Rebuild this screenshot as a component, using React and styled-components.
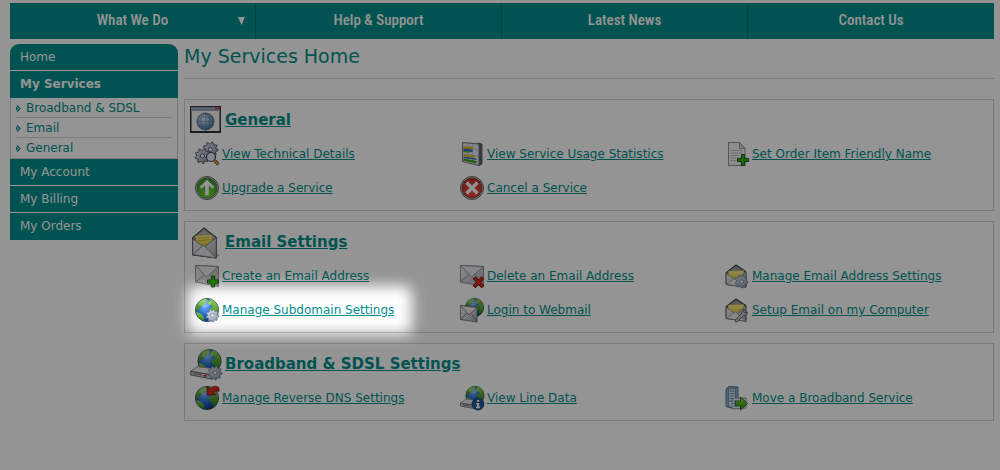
import styled, { createGlobalStyle, css } from 'styled-components';

const GlobalStyle = createGlobalStyle`
    * {
        box-sizing: border-box;
    }
    body {
        margin: 0;
        background: #ffffff;
        color: #008f8c;
        font-family: Verdana, "DejaVu Sans", sans-serif;
        font-size: 12px;
    }
    a {
        color: inherit;
    }
    ul {
        margin: 0;
        padding: 0;
        list-style: none;
    }
`

const Page = styled.div`
    min-height: 100vh;
    padding: 3px 6px 20px 10px;
`
const NavBar = styled.nav`
    display: grid;
    grid-template-columns: repeat(4, 1fr);
    height: 36px;
    background: #008f8c;
`
const NavLink = styled.a`
    display: flex;
    align-items: center;
    padding: 0 10px;
    color: #ffffff;
    font-family: "Roboto Condensed", Roboto, sans-serif;
    font-size: 15px;
    font-weight: 500;
    line-height: 18px;
    text-decoration: none;
    border-right: 1px solid #007471;

    &:last-child {
        border-right: none;
    }
`
const NavText = styled.span`
    flex: 1;
    padding-bottom: 2px;
    text-align: center;
`
const Arrow = styled.svg`
    width: 7px;
    height: 8px;
    margin-left: -7px;
`
const Columns = styled.div`
    display: flex;
    align-items: flex-start;
    gap: 6px;
    margin-top: 5px;
`
const Sidebar = styled.aside`
    width: 168px;
    flex-shrink: 0;
    border-radius: 9px 9px 0 0;
    overflow: hidden;
`
const SideLink = styled.a`
    display: block;
    height: 27px;
    padding-left: 10px;
    line-height: 26px;
    background: #008f8c;
    border-bottom: 1px solid #ffffff;
    color: #ffffff;
    text-decoration: none;

    ${props => props.$active && css`
        border-bottom: none;
        font-weight: bold;
    `}
    ${props => props.$last && css`
        border-bottom: none;
    `}
`
const SubMenu = styled.ul`
    padding: 0 5px;
    border: 1px solid #d2d2d2;
    border-top: none;
`
const SubItem = styled.li`
    height: 20px;
    line-height: 20px;
    border-bottom: 1px solid #d2d2d2;

    &:last-child {
        border-bottom: none;
    }
`
const SubLink = styled.a`
    display: flex;
    align-items: center;
    gap: 5px;
    text-decoration: none;
`
const Chevron = styled.svg`
    width: 5px;
    height: 7px;
`
const Main = styled.main`
    flex: 1;
    min-width: 0;
`
const Title = styled.h1`
    height: 35px;
    margin: 0 0 20px;
    font-size: 19px;
    font-weight: normal;
    line-height: 24px;
    border-bottom: 1px solid #d2d2d2;
`
const Panel = styled.section`
    margin-bottom: 10px;
    padding: 5px 8px 0 5px;
    border: 1px solid #d2d2d2;
`
const PanelHead = styled.h2`
    display: flex;
    align-items: center;
    gap: 3px;
    height: 32px;
    margin: 0 0 5px;
    font-size: 15px;
    line-height: 20px;
`
const HeadLink = styled.a`
    padding-bottom: 3px;
`
const Services = styled.ul`
    display: grid;
    grid-template-columns: repeat(3, 1fr);
`
const Service = styled.li`
    height: 34px;
    padding-left: 5px;
`
const ServiceLink = styled.a`
    position: relative;
    display: inline-flex;
    align-items: center;
    gap: 3px;
    height: 24px;
    white-space: nowrap;
`
const Icon = styled.svg`
    flex-shrink: 0;
    width: ${props => props.$size}px;
    height: ${props => props.$size}px;
    overflow: visible;
`
const Gradients = styled.svg`
    position: absolute;
    width: 0;
    height: 0;
`
// dims the whole page and leaves a soft hole round its parent
const Spotlight = styled.span`
    position: absolute;
    inset: -12px -18px -12px -7px;
    z-index: 10;
    border-radius: 8px;
    box-shadow: 0 0 0 3000px rgba(0, 0, 0, 0.42);
    filter: blur(7px);
    pointer-events: none;
`

const Defs = () => (
    <Gradients aria-hidden='true'>
        <defs>
            <radialGradient id='sea' cx='.4' cy='.35' r='.7'>
                <stop offset='0' stopColor='#6fb4ff' />
                <stop offset='.5' stopColor='#2468cc' />
                <stop offset='1' stopColor='#0c2c70' />
            </radialGradient>
            <linearGradient id='land' x1='0' y1='0' x2='0' y2='1'>
                <stop offset='0' stopColor='#8ed04e' />
                <stop offset='1' stopColor='#2c7c22' />
            </linearGradient>
            <linearGradient id='paper' x1='0' y1='0' x2='1' y2='1'>
                <stop offset='0' stopColor='#f6f6f8' />
                <stop offset='1' stopColor='#a6a8ae' />
            </linearGradient>
            <linearGradient id='metal' x1='0' y1='0' x2='1' y2='1'>
                <stop offset='0' stopColor='#e4eaf2' />
                <stop offset='1' stopColor='#7c8ca2' />
            </linearGradient>
            <linearGradient id='yellow' x1='0' y1='0' x2='0' y2='1'>
                <stop offset='0' stopColor='#fff2a0' />
                <stop offset='1' stopColor='#e0c020' />
            </linearGradient>
            <radialGradient id='green' cx='.5' cy='.8' r='.8'>
                <stop offset='0' stopColor='#6ee02c' />
                <stop offset='1' stopColor='#3a8a24' />
            </radialGradient>
            <radialGradient id='red' cx='.5' cy='.8' r='.8'>
                <stop offset='0' stopColor='#f04a44' />
                <stop offset='1' stopColor='#c03030' />
            </radialGradient>
            <radialGradient id='pale' cx='.4' cy='.35' r='.7'>
                <stop offset='0' stopColor='#d4e8f8' />
                <stop offset='1' stopColor='#4a7098' />
            </radialGradient>
            <linearGradient id='arrow' x1='0' y1='0' x2='0' y2='1'>
                <stop offset='0' stopColor='#8ae040' />
                <stop offset='1' stopColor='#2c8c10' />
            </linearGradient>
        </defs>
    </Gradients>
)

const Globe = ({ x = 12, y = 12, r = 12 }) => (
    <g transform={`translate(${x} ${y}) scale(${r / 12})`}>
        <circle r='11.6' fill='url(#sea)' stroke='#244a60' strokeWidth='.8' />
        <path fill='url(#land)' d='M-11-3C-10-7-6-11-1-11.3L1-10l-2 1 1 2-3 1-1 2-3 1-1 2-1 3-2-1z' />
        <path fill='url(#land)' d='M-10.500 2l3 1 3 2 2 3-1 3C-7 10-10 7-10.500 2z' />
        <path fill='url(#land)' d='M3-11C7-10 11-6 11.300-1L11 4 8 8 6 9 5 5 2 2 3-2 6-3 4-5 1-6 2-9z' />
        <ellipse cx='-2' cy='-6.500' rx='6' ry='3.500' fill='#ffffff' opacity='.25' />
    </g>
)

const gearPoints = (x, y, r) => {
    const points = [];
    for (let i = 0; i < 36; i++) {
        const angle = (i / 36) * Math.PI * 2;
        const radius = i % 4 < 2 ? r : r * 0.76;
        points.push(`${(x + Math.cos(angle) * radius).toFixed(2)},${(y + Math.sin(angle) * radius).toFixed(2)}`);
    }
    return points.join(' ');
}

const Gear = ({ x, y, r, stroke = '#66788e' }) => (
    <g>
        <polygon points={gearPoints(x, y, r)} fill='url(#metal)' stroke={stroke} strokeWidth='.8' strokeLinejoin='round' />
        <circle cx={x} cy={y} r={r * 0.5} fill='#b4c2d2' />
        <circle cx={x} cy={y} r={r * 0.27} fill='#ffffff' stroke={stroke} strokeWidth='.8' />
    </g>
)

const Envelope = () => (
    <g stroke='#85878b' strokeWidth='.9' strokeLinejoin='round'>
        <path fill='url(#paper)' d='M.5 1.500l23 1v20L.5 18z' />
        <path fill='none' d='M.8 18l8-7M23.200 22l-7-10' />
        <path fill='#e9e9ec' d='M.5 1.500L11.500 13 23.500 2.500z' />
    </g>
)

const OpenEnvelope = () => (
    <g strokeLinejoin='round'>
        <path fill='#606266' stroke='#3d3f44' d='M1 8.5L11 .8l10 6.7v15.7L1 20.5z' />
        <path fill='#9b9da2' d='M2.5 8.5L11 2l8.5 6-8 7z' />
        <path fill='url(#yellow)' stroke='#b8a030' strokeWidth='.5' d='M3.2 7l15.6-.5v5L11 17l-7.8-6z' />
        <path fill='url(#paper)' stroke='#828489' strokeWidth='.7' d='M1.3 9.5L11 16l9.7-8v15L1.3 20.3z' />
        <path fill='#ebebef' stroke='#828489' strokeWidth='.7' d='M1.3 20.3L10.5 14l10.2 9z' />
    </g>
)

const Modem = () => (
    <g strokeLinejoin='round'>
        <path fill='#ededf0' stroke='#777a80' strokeWidth='.7' d='M.5 17L6 13l17 2-4 5z' />
        <path fill='#c6c9d0' stroke='#55595f' strokeWidth='.7' d='M.5 17l18.500 3v3.500L.5 20z' />
        <path stroke='#62656c' strokeWidth='.8' d='M3 18.800l7 1.200' />
        <path stroke='#e02020' strokeWidth='1.400' d='M11.500 20.400l2.500.4' />
    </g>
)

const Plus = ({ x, y }) => (
    <path
        transform={`translate(${x} ${y})`}
        fill='#2fae10'
        stroke='#145004'
        strokeWidth='.9'
        d='M-1.600-5.500h3.200v3.900h3.900v3.200H1.600v3.900h-3.200V1.600h-3.900v-3.200h3.900z'
    />
)

const drawings = {
    window: (
        <>
            <path fill='#30343a' d='M0 1h31v27H0z' />
            <path fill='#93a4b8' d='M1 2h29v4H1z' />
            <path fill='#e02030' d='M25 2.500h2v2h-2zM28 2.500h2v2h-2z' />
            <path fill='#f4f5f7' d='M1.500 6h28v20h-28z' />
            <circle cx='15.500' cy='16.500' r='8.500' fill='url(#pale)' stroke='#48617c' strokeWidth='.8' />
            <path fill='none' stroke='#3d6288' strokeWidth='.5' opacity='.7' d='M7 16.500h17M15.500 8v17M8.500 12h14M8.500 21h14M15.500 8c-6 4-6 13 0 17M15.500 8c6 4 6 13 0 17' />
        </>
    ),
    gears: (
        <>
            <Gear x={15.5} y={7.5} r={7.5} stroke='#383e48' />
            <Gear x={7.5} y={14} r={7.5} stroke='#383e48' />
            <path stroke='#5a4010' strokeWidth='3.200' d='M19.500 18.500l4 4' />
            <path stroke='#e0a040' strokeWidth='1.800' d='M19.500 18.500l4 4' />
            <circle cx='16' cy='15' r='4.500' fill='#dcebf7' stroke='#424b58' strokeWidth='1.200' />
        </>
    ),
    stats: (
        <>
            <path fill='#60646c' stroke='#42464c' strokeWidth='.8' d='M18 1l4 1v20l-3 1.500z' />
            <path fill='#e0ebf4' stroke='#68707a' strokeWidth='1' d='M2.500.5L19 2v21.500l-16.500-4z' />
            <path stroke='#abc0d0' strokeWidth='.6' d='M7.500 1.500v19M12.500 2v20M3 6l15 1.500M3 12l15 2' />
            <path fill='#e8b81c' d='M3.500 4l9 1v2.500l-9-1z' />
            <path fill='#2870c0' d='M3.500 6.500l9 1V10l-9-1z' />
            <path fill='#409c18' d='M3.500 9l6 .8v1l-6-.8z' />
            <path fill='#e8b81c' d='M3.500 12l11 1.500V16l-11-2z' />
            <path fill='#2870c0' d='M3.500 14.500l13 2V18l-13-2z' />
            <path fill='#409c18' d='M3.500 16.500l13 2.500v2.500l-13-3z' />
        </>
    ),
    pageAdd: (
        <>
            <path fill='#f1f2f4' stroke='#84878c' strokeWidth='.9' d='M3.500.5h11l5.500 6v17H3.500z' />
            <path fill='#d0d2d6' stroke='#84878c' strokeWidth='.8' d='M14.500.5v6H20z' />
            <path stroke='#bbbdc2' strokeWidth='.9' d='M5.500 8.500h12M5.500 11h12M5.500 13.500h8M5.500 16h7M5.500 18.500h6' />
            <Plus x={18} y={18} />
        </>
    ),
    upgrade: (
        <>
            <circle cx='12' cy='12' r='11.500' fill='#d5d8da' stroke='#5e6264' />
            <circle cx='12' cy='12' r='10' fill='url(#green)' stroke='#3c6e2c' strokeWidth='.8' />
            <path fill='#ffffff' stroke='#5a9f48' strokeWidth='.4' d='M12 3.500l7.500 7.500-2 2-3.500-3.300V19.500h-4V9.700L6.500 13l-2-2z' />
        </>
    ),
    cancel: (
        <>
            <circle cx='12' cy='12' r='11.500' fill='#d5d8da' stroke='#5e6264' />
            <circle cx='12' cy='12' r='10' fill='url(#red)' stroke='#772020' strokeWidth='.8' />
            <path stroke='#ffffff' strokeWidth='3.400' d='M6.500 6.500l11 11M17.500 6.500l-11 11' />
        </>
    ),
    mail: (
        <g strokeLinejoin='round'>
            <path fill='#818388' d='M24 30l6-1-4-4z' opacity='.6' />
            <path fill='#7c7e83' stroke='#404248' d='M2.500 10.500L14 .8l12.500 9.700V31l-24-3z' />
            <path fill='#b5b7bc' d='M4 11L14 2.500 25 11l-10 7z' />
            <path fill='url(#yellow)' stroke='#a08c20' strokeWidth='.6' d='M5 8.500l17-1 .5 8-9 4.500L6 15z' />
            <path stroke='#c0a020' strokeWidth='.8' d='M7.500 11l12-.8M8 13.500l12-.8' />
            <path fill='url(#paper)' stroke='#74767b' strokeWidth='.8' d='M2.800 12L14 20l12.200-9v20L2.800 27.500z' />
            <path fill='#e2e3e7' stroke='#74767b' strokeWidth='.8' d='M2.800 27.500L13.500 18l12.700 13z' />
        </g>
    ),
    mailAdd: (
        <>
            <Envelope />
            <Plus x={18} y={17.5} />
        </>
    ),
    mailDelete: (
        <>
            <Envelope />
            <path stroke='#701008' strokeWidth='3.800' d='M14 13.500l9 9.500M23 13.500L14 23' />
            <path stroke='#e02a20' strokeWidth='2.400' d='M14.500 14l8 8.500M22.500 14l-8 8.500' />
        </>
    ),
    mailGear: (
        <>
            <OpenEnvelope />
            <Gear x={16.500} y={17.500} r={6.500} />
        </>
    ),
    mailWrench: (
        <>
            <OpenEnvelope />
            <path fill='#c7cbd1' stroke='#54585f' strokeWidth='.9' strokeLinejoin='round' d='M10.500 22l6-6.500c-.5-2 .8-4 3-4l-1 2.500 1.500 1.200 2.300-1.200c.3 2.300-1.500 4-3.800 3.700l-6 6c-1.500.8-3-.2-2-1.700z' />
        </>
    ),
    globeGear: (
        <>
            <Globe />
            <Gear x={17.5} y={17.5} r={6.5} />
        </>
    ),
    webmail: (
        <>
            <Globe x={14.5} y={9.5} r={9.5} />
            <g stroke='#66686d' strokeWidth='.8' strokeLinejoin='round'>
                <path fill='url(#paper)' d='M.5 7.500l16.500 2V24L.5 21.500z' />
                <path fill='none' d='M.8 21.500l6-6.500M16.800 23.500l-5-7' />
                <path fill='#ededf0' d='M.5 7.500L9 17l8-7.500z' />
            </g>
        </>
    ),
    broadband: (
        <>
            <Globe x={19.5} y={12} r={12} />
            <g transform='translate(0 2) scale(1.200)'>
                <Modem />
            </g>
            <Gear x={25} y={24} r={7} />
        </>
    ),
    reverse: (
        <>
            <Globe />
            <path fill='#dc2626' stroke='#801414' strokeWidth='.8' strokeLinejoin='round' d='M12 .5l3 2.500C18-.500 22-.500 24 2v3.500c-2-1-4-.5-5.500.5l2.500 2.500-9 .5z' />
        </>
    ),
    lineData: (
        <>
            <Globe x={15} y={9.5} r={9.5} />
            <Modem />
            <circle cx='18' cy='18' r='6' fill='#1c5c98' stroke='#123c64' strokeWidth='.8' />
            <path fill='#ffffff' d='M17 14h2.200v1.800H17zM16 17h3.200v4H20v1.200h-4V21h1v-2.800h-1z' />
        </>
    ),
    server: (
        <>
            <path fill='#84b0d0' stroke='#485f74' strokeWidth='.8' d='M1 3l3-2.500 9 .5v20l-5 1.500-7-2z' />
            <path fill='#dbeaf5' stroke='#485f74' strokeWidth='.6' d='M3.500 3l7-.5v20l-7-2z' />
            <path stroke='#4c84b0' strokeWidth='1' d='M4.500 5h5M4.500 7.500h5M4.500 10h5M4.500 12.500h5M4.500 15h5' />
            <path fill='#dbeaf5' stroke='#687f94' strokeWidth='.8' d='M7 14l2-2 12 0v10l-14 1z' />
            <path stroke='#4c84b0' strokeWidth='1' d='M8.500 15h3M8.500 17.500h3M8.500 20h3' />
            <path fill='url(#arrow)' stroke='#1e5c0c' strokeWidth='.8' strokeLinejoin='round' d='M10.500 15h5v-4l7 6.500-7 6.500v-4h-5z' />
        </>
    ),
}

const panels = [
    {
        title: 'General',
        icon: 'window',
        services: [
            { name: 'View Technical Details', icon: 'gears' },
            { name: 'View Service Usage Statistics', icon: 'stats' },
            { name: 'Set Order Item Friendly Name', icon: 'pageAdd' },
            { name: 'Upgrade a Service', icon: 'upgrade' },
            { name: 'Cancel a Service', icon: 'cancel' },
        ],
    },
    {
        title: 'Email Settings',
        icon: 'mail',
        services: [
            { name: 'Create an Email Address', icon: 'mailAdd' },
            { name: 'Delete an Email Address', icon: 'mailDelete' },
            { name: 'Manage Email Address Settings', icon: 'mailGear' },
            { name: 'Manage Subdomain Settings', icon: 'globeGear', highlighted: true },
            { name: 'Login to Webmail', icon: 'webmail' },
            { name: 'Setup Email on my Computer', icon: 'mailWrench' },
        ],
    },
    {
        title: 'Broadband & SDSL Settings',
        icon: 'broadband',
        services: [
            { name: 'Manage Reverse DNS Settings', icon: 'reverse' },
            { name: 'View Line Data', icon: 'lineData' },
            { name: 'Move a Broadband Service', icon: 'server' },
        ],
    },
]

const Drawing = ({ name, size }) => (
    <Icon $size={size} viewBox={`0 0 ${size} ${size}`} aria-hidden='true'>
        {drawings[name]}
    </Icon>
)

const App = () => {
    return (
        <Page>
            <GlobalStyle />
            <Defs />
            <NavBar>
                <NavLink href='#what-we-do'>
                    <NavText>What We Do</NavText>
                    <Arrow viewBox='0 0 7 8' aria-hidden='true'>
                        <path fill='#ffffff' d='M0 0h7L3.500 8z' />
                    </Arrow>
                </NavLink>
                <NavLink href='#help'><NavText>Help &amp; Support</NavText></NavLink>
                <NavLink href='#news'><NavText>Latest News</NavText></NavLink>
                <NavLink href='#contact'><NavText>Contact Us</NavText></NavLink>
            </NavBar>
            <Columns>
                <Sidebar>
                    <SideLink href='#home'>Home</SideLink>
                    <SideLink href='#services' $active>My Services</SideLink>
                    <SubMenu>
                        {['Broadband & SDSL', 'Email', 'General'].map(name => (
                            <SubItem key={name}>
                                <SubLink href='#services'>
                                    <Chevron viewBox='0 0 5 7' aria-hidden='true'>
                                        <path fill='none' stroke='#008f8c' strokeWidth='1.200' d='M1 .5l3 3-3 3' />
                                        <path fill='#008f8c' d='M0 1.500l2 2-2 2z' />
                                    </Chevron>
                                    {name}
                                </SubLink>
                            </SubItem>
                        ))}
                    </SubMenu>
                    <SideLink href='#account'>My Account</SideLink>
                    <SideLink href='#billing'>My Billing</SideLink>
                    <SideLink href='#orders' $last>My Orders</SideLink>
                </Sidebar>
                <Main>
                    <Title>My Services Home</Title>
                    {panels.map(panel => (
                        <Panel key={panel.title}>
                            <PanelHead>
                                <Drawing name={panel.icon} size={32} />
                                <HeadLink href='#services'>{panel.title}</HeadLink>
                            </PanelHead>
                            <Services>
                                {panel.services.map(service => (
                                    <Service key={service.name}>
                                        <ServiceLink href='#service'>
                                            <Drawing name={service.icon} size={24} />
                                            {service.name}
                                            {service.highlighted && <Spotlight />}
                                        </ServiceLink>
                                    </Service>
                                ))}
                            </Services>
                        </Panel>
                    ))}
                </Main>
            </Columns>
        </Page>
    )
}

export default App
